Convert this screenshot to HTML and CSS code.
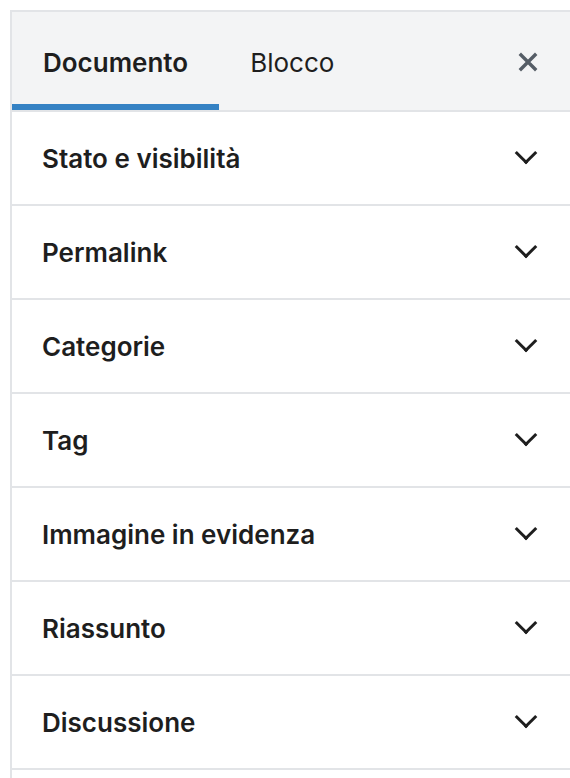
FILE: index.html
```html
<!DOCTYPE html>
<html lang="it">

<head>
    <meta charset="UTF-8">
    <meta name="viewport" content="width=device-width, initial-scale=1.0">
    <title>Impostazioni documento</title>
    <link rel="stylesheet" href="styles.css">
</head>

<body>
    <aside class="sidebar">
        <div class="sidebar-header">
            <div class="tabs">
                <button class="tab active">Documento</button>
                <button class="tab">Blocco</button>
            </div>
            <button class="close-btn" aria-label="Chiudi">
                <svg width="20" height="20" viewBox="0 0 20 20">
                    <path d="M3 3 L17 17 M17 3 L3 17" stroke="#555d66" stroke-width="3.4" stroke-linecap="square" fill="none" />
                </svg>
            </button>
        </div>

        <div class="panel-list">
            <div class="panel-row"><span>Stato e visibilità</span><i class="chevron"></i></div>
            <div class="panel-row"><span>Permalink</span><i class="chevron"></i></div>
            <div class="panel-row"><span>Categorie</span><i class="chevron"></i></div>
            <div class="panel-row"><span>Tag</span><i class="chevron"></i></div>
            <div class="panel-row"><span>Immagine in evidenza</span><i class="chevron"></i></div>
            <div class="panel-row"><span>Riassunto</span><i class="chevron"></i></div>
            <div class="panel-row"><span>Discussione</span><i class="chevron"></i></div>
        </div>
    </aside>
</body>

</html>
```

FILE: styles.css
```css
body {
    margin: 0;
    padding: 0;
    background: #fff;
    font-family: 'Inter', 'Noto Sans', sans-serif;
    color: #1e1e1e;
}

.sidebar {
    margin: 10px 0 0 10px;
    border-top: 2px solid #e2e4e7;
    border-left: 2px solid #e2e4e7;
    height: 766px;
}

.sidebar-header {
    display: flex;
    align-items: stretch;
    justify-content: space-between;
    height: 98px;
    background: #f3f4f5;
    border-bottom: 2px solid #e2e4e7;
}

.tabs {
    display: flex;
}

.tab {
    background: none;
    border: none;
    border-bottom: 6px solid transparent;
    padding: 9px 31px 0;
    font-family: inherit;
    font-size: 26px;
    font-weight: 400;
    color: #1e1e1e;
    cursor: pointer;
}

.tab.active {
    font-weight: 600;
    border-bottom-color: #3582c4;
}

.close-btn {
    background: none;
    border: none;
    padding: 2px 32px 0 0;
    display: flex;
    align-items: center;
    cursor: pointer;
}

.panel-row {
    display: flex;
    align-items: center;
    justify-content: space-between;
    height: 92px;
    padding: 0 32px 0 30px;
    border-bottom: 2px solid #e2e4e7;
    font-size: 26px;
    font-weight: 600;
}

.chevron {
    width: 13px;
    height: 13px;
    border-right: 3.5px solid #1e1e1e;
    border-bottom: 3.5px solid #1e1e1e;
    transform: translateY(-5px) rotate(45deg);
    margin-right: 4px;
}
```
